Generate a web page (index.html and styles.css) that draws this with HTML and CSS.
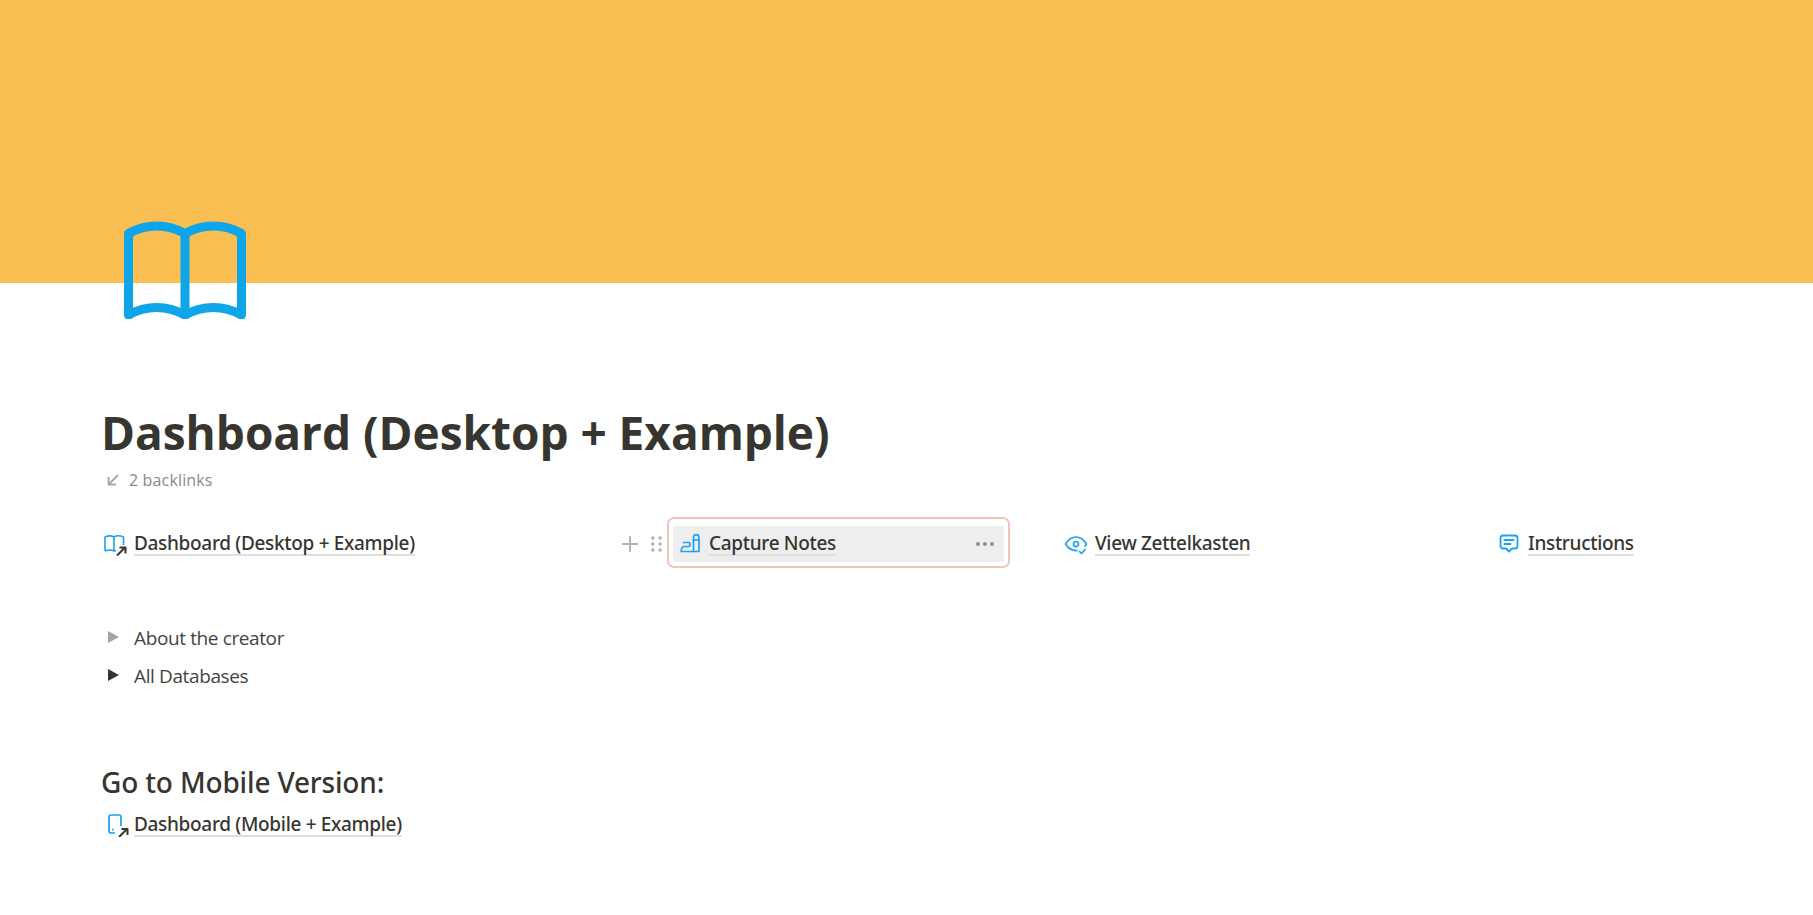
FILE: index.html
```html
<!DOCTYPE html>
<html lang="en">
<head>
<meta charset="utf-8">
<title>Dashboard (Desktop + Example)</title>
<link rel="stylesheet" href="styles.css">
</head>
<body>
<header class="cover"></header>
<main class="page">
  <svg class="page-icon" viewBox="0 0 122 98" fill="none" stroke="#0ea5e9" stroke-width="9" stroke-linecap="round" stroke-linejoin="round">
    <path d="M4.500 94V12.500C22 2.500 43 2.500 61 12.500C79 2.500 100 2.500 117.500 12.500V94C100 84 79 84 61 94C43 84 22 84 4.500 94Z"/>
    <path d="M61 12.500V94"/>
  </svg>
  <h1 class="title">Dashboard (Desktop + Example)</h1>
  <div class="backlinks">
    <svg class="backlink-arrow" viewBox="0 0 12 12" fill="none" stroke="#a8a7a3" stroke-width="1.8"><path d="M11 1L1.500 10.500M1.500 3V10.500H9"/></svg>
    <span>2 backlinks</span>
  </div>
  <div class="columns">
    <div class="col col-a">
      <div class="link-row">
        <svg class="ico" viewBox="0 0 24 24" fill="none" stroke="#1da1f2" stroke-width="1.6" stroke-linejoin="round"><path d="M2 19V5C5.500 3.500 8.500 3.500 11 5C13.500 3.500 17 3.500 20.500 5V13M11 5V19C8.500 17.800 5 17.800 2 19M11 19L13 18.500"/><path d="M14 23.500L22 15.500M16.500 15.500H22.500V21.500" stroke="#37352f" stroke-width="2"/></svg>
        <a class="link">Dashboard (Desktop + Example)</a>
      </div>
    </div>
    <div class="col col-b">
      <div class="handles">
        <svg class="plus" viewBox="0 0 18 18" stroke="#b5b4b1" stroke-width="2"><path d="M9 1V17M1 9H17"/></svg>
        <svg class="grip" viewBox="0 0 11 16" fill="#b0afac"><circle cx="1.800" cy="2" r="1.700"/><circle cx="9.200" cy="2" r="1.700"/><circle cx="1.800" cy="8" r="1.700"/><circle cx="9.200" cy="8" r="1.700"/><circle cx="1.800" cy="14" r="1.700"/><circle cx="9.200" cy="14" r="1.700"/></svg>
      </div>
      <div class="link-row selected">
        <svg class="ico ico-pen" viewBox="0 0 24 24" fill="none" stroke="#1da1f2" stroke-width="1.700" stroke-linecap="round" stroke-linejoin="round"><path d="M13.500 6C13.500 1.500 19 1.500 19 6V19.500H13.500Z"/><path d="M13.500 8H19"/><path d="M3.500 10.500H8.500C10.500 10.500 10.500 14.500 8.500 14.500H4.500C2 14.500 1.200 16.500 1.200 19.500H13.500"/></svg>
        <a class="link">Capture Notes</a>
        <svg class="more" viewBox="0 0 18 4" fill="#8e8d89"><circle cx="2" cy="2" r="2"/><circle cx="9" cy="2" r="2"/><circle cx="16" cy="2" r="2"/></svg>
      </div>
    </div>
    <div class="col col-c">
      <div class="link-row">
        <svg class="ico" viewBox="0 0 24 24" fill="none" stroke="#1da1f2" stroke-width="1.700" stroke-linecap="round" stroke-linejoin="round"><path d="M13 18.500C8 18.800 4 16 1.500 12C4 8 8 5 12 5C16 5 20 8 22.500 12C22 13 21.500 13.500 21 14.200"/><circle cx="12" cy="12" r="2.500"/><path d="M15.500 19.500L17.500 21.500L21 17.500"/></svg>
        <a class="link">View Zettelkasten</a>
      </div>
    </div>
    <div class="col col-d">
      <div class="link-row">
        <svg class="ico-chat" viewBox="0 0 20 20" fill="none" stroke="#1da1f2" stroke-width="1.800" stroke-linecap="round" stroke-linejoin="round"><path d="M4 1.500H16C17.500 1.500 18.500 2.500 18.500 4V12C18.500 13.500 17.500 14.500 16 14.500H13L10 17.500L7 14.500H4C2.500 14.500 1.500 13.500 1.500 12V4C1.500 2.500 2.500 1.500 4 1.500Z"/><path d="M5.500 6H14.500M5.500 10H11.500"/></svg>
        <a class="link">Instructions</a>
      </div>
    </div>
  </div>
  <div class="toggles">
    <div class="toggle"><span class="tri tri-grey"></span><span>About the creator</span></div>
    <div class="toggle"><span class="tri"></span><span>All Databases</span></div>
  </div>
  <h2 class="subhead">Go to Mobile Version:</h2>
  <div class="link-row mobile">
    <svg class="ico" viewBox="0 0 24 24" fill="none" stroke-linejoin="round"><path d="M10 20H6C4.500 20 4 19.200 4 18V4C4 2.500 4.800 2 6 2H14C15.200 2 16 2.500 16 4V13" stroke="#1da1f2" stroke-width="1.700"/><circle cx="8" cy="16.500" r="1" fill="#1da1f2"/><path d="M14 24L22 16M16.500 16H22.500V22" stroke="#37352f" stroke-width="2"/></svg>
    <a class="link">Dashboard (Mobile + Example)</a>
  </div>
</main>
</body>
</html>
```
FILE: styles.css
```css
* { box-sizing: border-box; }
html, body { margin: 0; height: 100%; }
body {
  background: #fff;
  color: #37352f;
  font-family: "Open Sans", "Noto Sans", "Liberation Sans", sans-serif;
  overflow: hidden;
}
.cover { height: 283px; background: #fabf53; }
.page { position: relative; padding-left: 101px; height: 632px; }
.page-icon { position: absolute; left: 124px; top: -62px; width: 122px; height: 98px; }
.title {
  margin: 0;
  padding-top: 118px;
  font-size: 46px;
  line-height: 62px;
  font-weight: 700;
  letter-spacing: -0.03px;
}
.backlinks {
  display: flex;
  align-items: center;
  margin-top: 2px;
  height: 30px;
  color: #8a8986;
  font-size: 16px;
  letter-spacing: 0.15px;
}
.backlink-arrow { width: 12px; height: 12px; margin: 0 10px 0 6px; }
.columns { display: grid; grid-template-columns: 572px 389px 433px 1fr; margin-top: 15px; height: 64px; }
.col { position: relative; }
.link-row {
  display: flex;
  align-items: center;
  height: 36px;
  margin-top: 16px;
  font-family: "Noto Sans", "Open Sans", sans-serif;
  font-size: 19px;
  font-weight: 500;
}
.col-b .link-row { padding: 0 10px 0 7px; }
.selected {
  position: relative;
  width: 331px;
  background: #eeeeee;
}
.selected::before {
  content: "";
  position: absolute;
  left: -6px;
  right: -6px;
  top: -9px;
  bottom: -6px;
  border: 2px solid #f2c4bc;
  border-radius: 7px;
}
.ico { width: 24px; height: 24px; flex: none; }
.col-a .ico { margin: 0 7px 0 2px; }
.col-b .ico { margin-right: 5px; }
.col-c .ico { margin: 0 7px 0 2px; }
.ico-chat { width: 20px; height: 20px; flex: none; margin: 0 9px 0 4px; }
.mobile .ico { margin: 0 5px 0 4px; }
.link {
  border-bottom: 2px solid #dfdfde;
  line-height: 22px;
  letter-spacing: -0.32px;
}
.more { width: 18px; height: 4px; margin-left: auto; }
.handles { position: absolute; left: -52px; top: 25px; width: 52px; height: 18px; display: flex; align-items: center; gap: 12px; z-index: 1; }
.plus { width: 18px; height: 18px; flex: none; }
.grip { width: 11px; height: 16px; flex: none; }
.toggles { margin-top: 45px; }
.toggle {
  display: flex;
  align-items: center;
  height: 38px;
  font-size: 19px;
  letter-spacing: -0.38px;
  color: #45433e;
}
.tri {
  width: 0;
  height: 0;
  border-style: solid;
  border-width: 6px 0 6px 11px;
  border-color: transparent transparent transparent #37352f;
  margin: -3px 15px 0 7px;
}
.tri-grey { border-left-color: #a5a4a1; }
.subhead {
  margin: 0;
  padding-top: 67px;
  font-family: "Noto Sans", "Open Sans", sans-serif;
  font-size: 28px;
  line-height: 40px;
  font-weight: 500;
  letter-spacing: -0.16px;
}
.mobile { margin-top: 5px; }
```
